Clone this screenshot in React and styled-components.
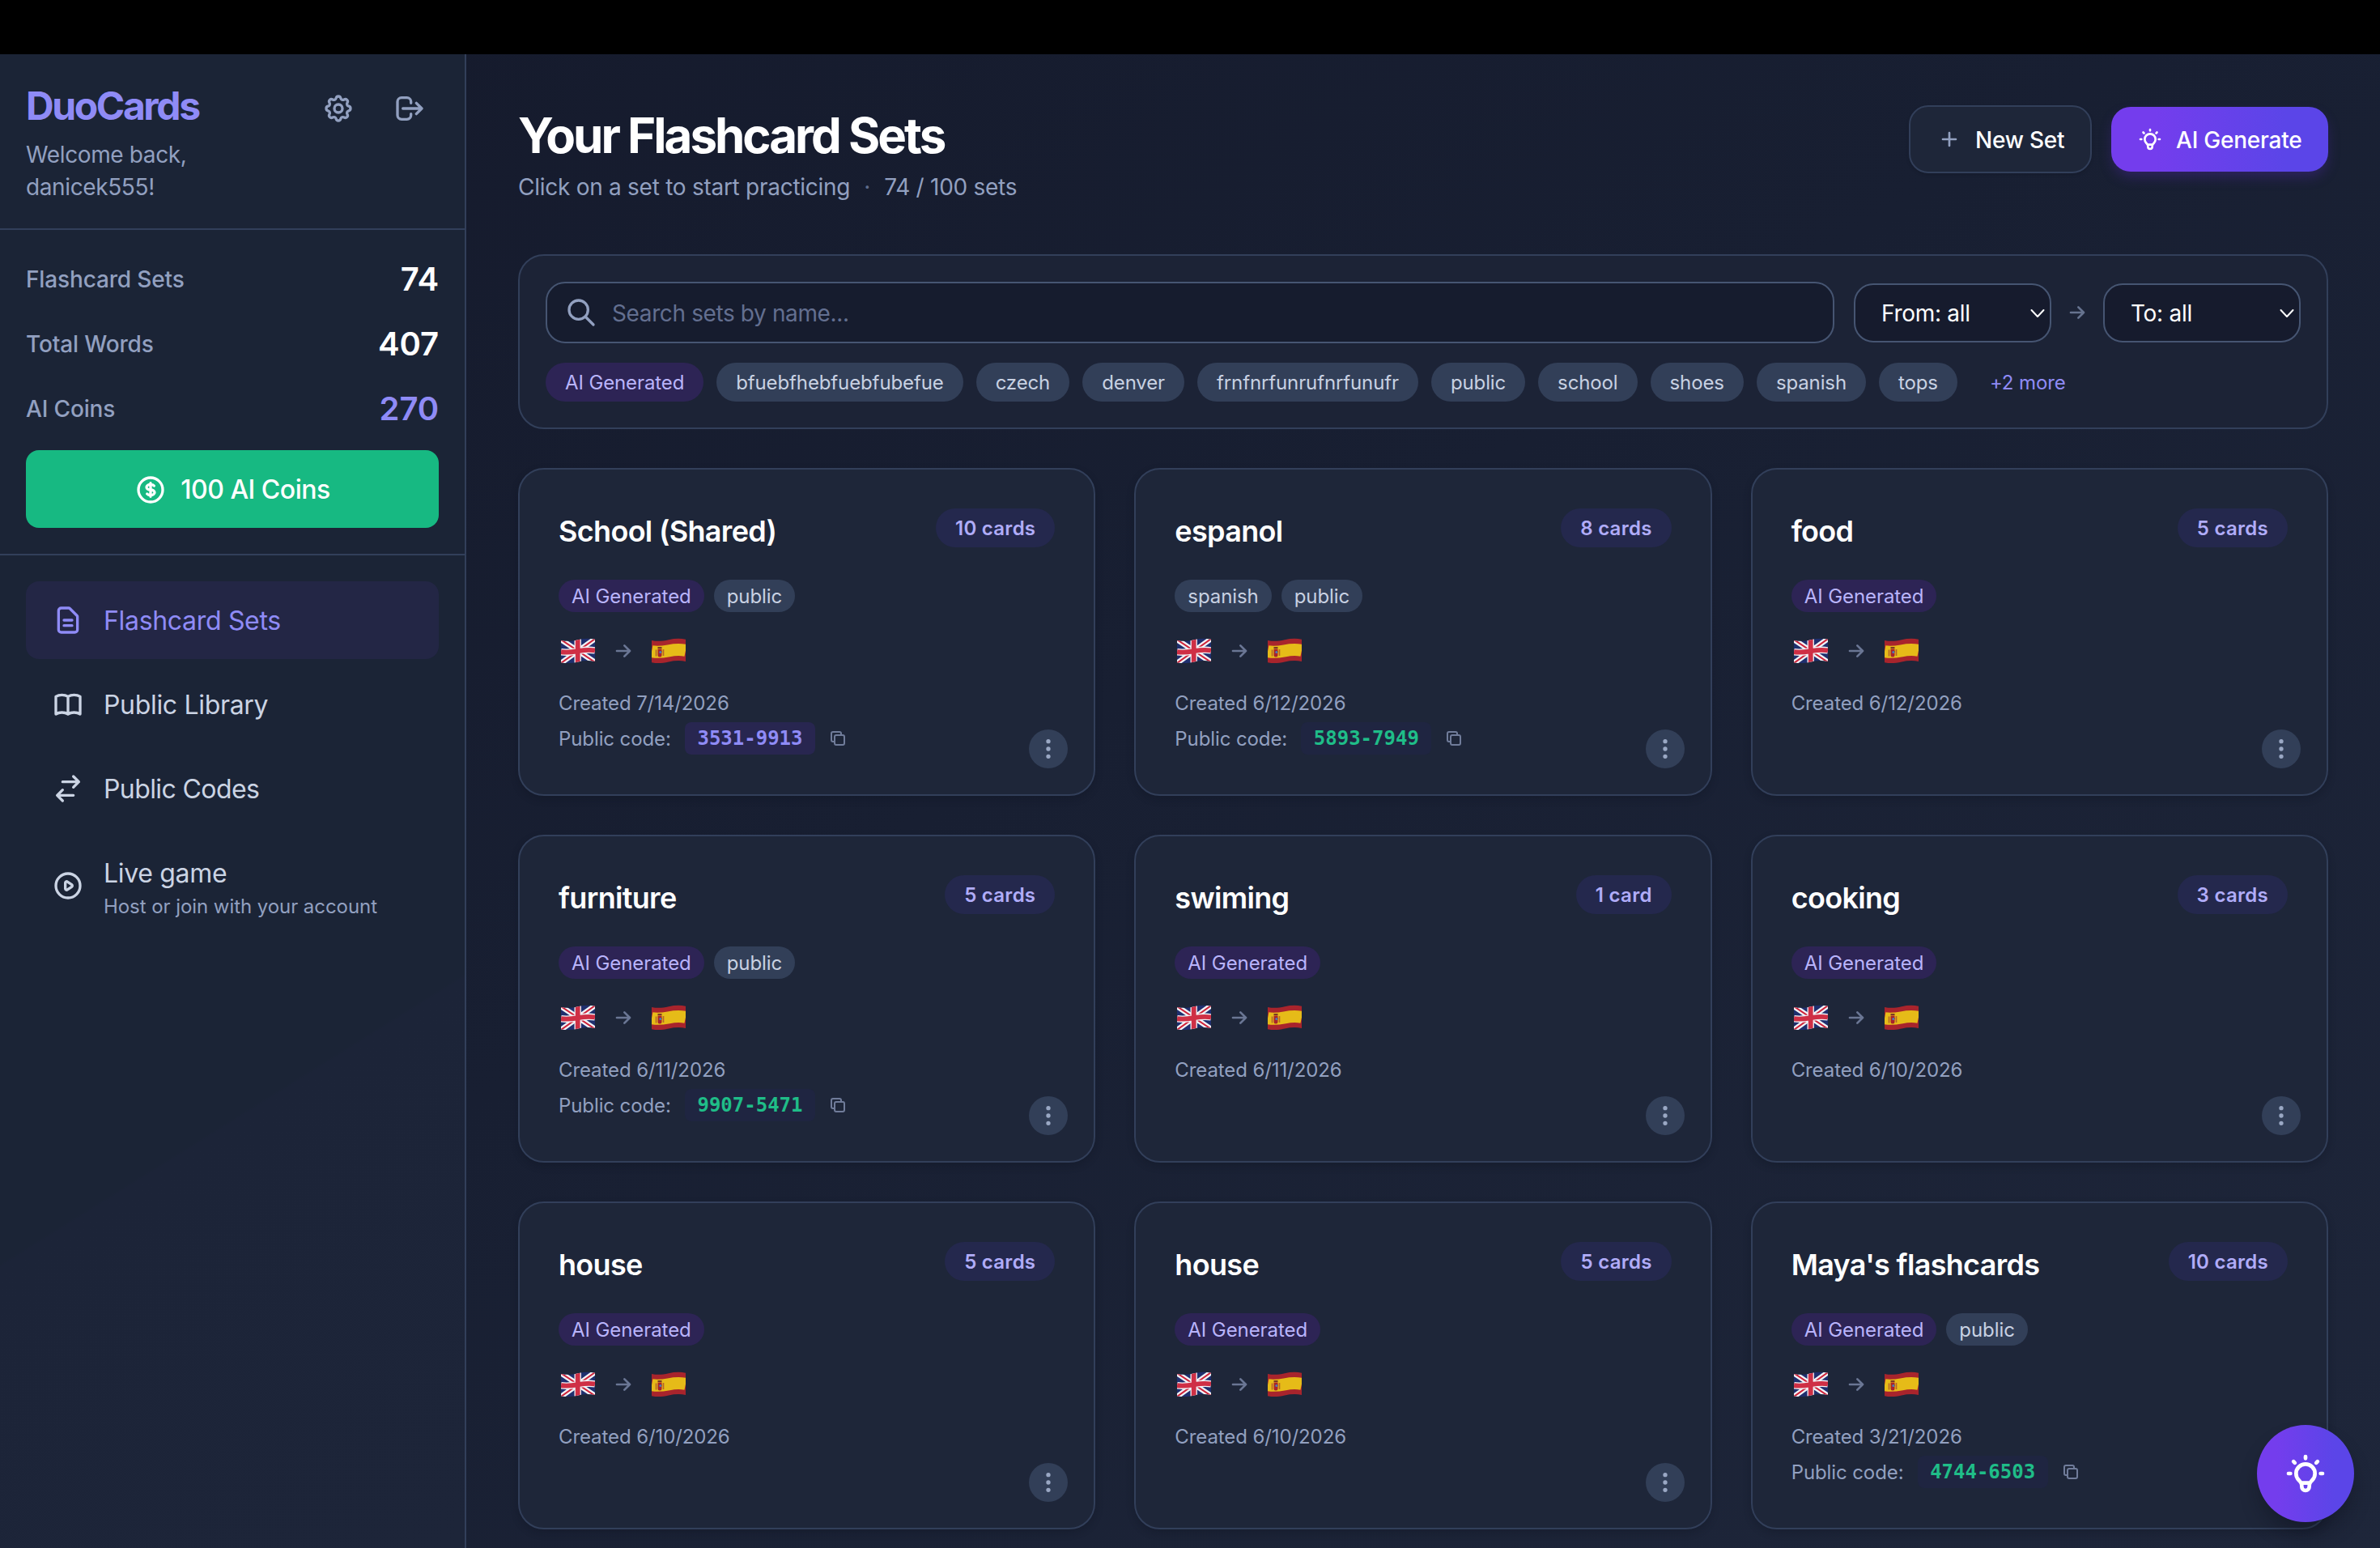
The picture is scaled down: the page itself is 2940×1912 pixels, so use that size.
import React from "react";
import styled, { createGlobalStyle, css } from "styled-components";

const GlobalStyle = createGlobalStyle`
  *, *::before, *::after { box-sizing: border-box; }
  html, body { margin: 0; padding: 0; background: #000; }
  body {
    width: 2940px;
    height: 1912px;
    overflow: hidden;
    font-family: Inter, "Noto Sans", sans-serif;
    color: #fff;
    -webkit-font-smoothing: antialiased;
  }
  button, input { font-family: inherit; }
  h1, h2, p { margin: 0; }
`;

const Screen = styled.div`
  display: flex;
  flex-direction: column;
  width: 2940px;
  height: 1912px;
  overflow: hidden;
`;

const Notch = styled.div`
  flex: none;
  height: 67px;
  background: #000;
`;

const Shell = styled.div`
  flex: 1;
  min-height: 0;
  display: flex;
  background: linear-gradient(to bottom right, #151a2c 0%, #181f32 45%, #1e263a 100%);
`;

const Sidebar = styled.aside`
  flex: none;
  width: 576px;
  border-right: 2px solid #323f5a;
  background: linear-gradient(148deg, #1b2436 0%, #1b2436 67.8%, #1c2438 68%, #1d2539 100%);
`;

const SideHeader = styled.div`
  height: 217px;
  padding: 31px 32px 0;
  display: flex;
  justify-content: space-between;
  border-bottom: 2px solid #323f5a;
`;

const Brand = styled.h1`
  padding-top: 1px;
  font-size: 48px;
  line-height: 64px;
  font-weight: 700;
  letter-spacing: -2.4px;
  color: #8f8bf6;
`;

const Welcome = styled.p`
  margin-top: 8px;
  width: 260px;
  font-size: 28px;
  line-height: 40px;
  color: #92a0c0;
  letter-spacing: -0.38px;
`;

const SideActions = styled.div`
  display: flex;
  gap: 16px;
`;

const IconButton = styled.button`
  width: 72px;
  height: 72px;
  padding: 16px;
  border: 0;
  background: none;
  color: #92a0c0;
`;

const Stats = styled.div`
  height: 402px;
  padding: 32px 32px 0;
  display: flex;
  flex-direction: column;
  gap: 24px;
  border-bottom: 2px solid #323f5a;
`;

const StatRow = styled.div`
  display: flex;
  align-items: center;
  justify-content: space-between;
  height: 56px;
  padding-top: 1px;
`;

const StatLabel = styled.span`
  font-size: 28px;
  font-weight: 500;
  letter-spacing: -0.15px;
  color: #92a0c0;
`;

const StatValue = styled.span`
  font-size: 40px;
  font-weight: 600;
  letter-spacing: -0.1px;
  color: ${(p) => (p.$accent ? "#8f8bf6" : "#fff")};
`;

const CoinButton = styled.button`
  display: flex;
  align-items: center;
  justify-content: center;
  gap: 17px;
  height: 96px;
  padding-top: 2px;
  border: 0;
  border-radius: 16px;
  background: #17b982;
  color: #fff;
  font-size: 32px;
  font-weight: 500;
  letter-spacing: -0.5px;
`;

const Nav = styled.nav`
  display: flex;
  flex-direction: column;
  gap: 8px;
  padding: 32px;
`;

const NavItem = styled.a`
  display: flex;
  align-items: center;
  gap: 24px;
  padding: 24px 32px;
  border-radius: 16px;
  background: ${(p) => (p.$active ? "#232645" : "transparent")};
  color: ${(p) => (p.$active ? "#8f8bf6" : "#cbd4e4")};
`;

const NavText = styled.div`
  display: flex;
  flex-direction: column;
  font-size: 32px;
  line-height: 50px;
  height: ${(p) => (p.$tall ? 80 : 48)}px;
  font-weight: 400;
  letter-spacing: ${(p) => (p.$tight ? "-0.6px" : "-0.32px")};
`;

const NavHint = styled.span`
  font-size: 24px;
  line-height: 32px;
  font-weight: 400;
  letter-spacing: -0.06px;
  color: #92a0c0;
`;

const Main = styled.main`
  flex: 1;
  min-width: 0;
  padding: 63px 64px 0;
  display: flex;
  flex-direction: column;
`;

const PageHeader = styled.header`
  display: flex;
  justify-content: space-between;
  height: 184px;
`;

const PageTitle = styled.h1`
  font-size: 60px;
  line-height: 74px;
  font-weight: 700;
  letter-spacing: -3px;
`;

const Subtitle = styled.p`
  margin-top: 6px;
  display: flex;
  align-items: center;
  font-size: 28px;
  line-height: 42px;
  letter-spacing: -0.27px;
  color: #92a0c0;
`;

const Dot = styled.span`
  width: 42px;
  text-align: center;
  color: #5f6c8c;
`;

const HeaderActions = styled.div`
  display: flex;
  align-items: center;
  align-self: flex-start;
  gap: 24px;
`;

const Button = styled.button`
  display: flex;
  align-items: center;
  gap: 16px;
  padding: 0 32px;
  border-radius: 24px;
  color: #fff;
  font-size: 28px;
  font-weight: 500;
  letter-spacing: -0.22px;
  white-space: nowrap;
  ${(p) =>
    p.$primary
      ? css`
          width: 268px;
          height: 80px;
          border: 0;
          background: linear-gradient(to right, #743ded 20%, #5b45e8 80%);
          box-shadow: 0 8px 16px -2px rgba(80, 40, 170, 0.4);
        `
      : css`
          width: 226px;
          height: 84px;
          border: 2px solid #323f5a;
          background: #1e2639;
          box-shadow: 0 2px 4px rgba(0, 0, 0, 0.12);
          svg { color: #92a0c0; }
        `}
`;

const ButtonText = styled.span`
  padding-top: 1px;
`;

const FilterPanel = styled.section`
  height: 216px;
  padding: 32px;
  border: 2px solid #323f5a;
  border-radius: 32px;
  background: #1c2336;
`;

const FilterRow = styled.div`
  display: flex;
  align-items: center;
  height: 76px;
`;

const SearchBox = styled.label`
  flex: 1;
  height: 76px;
  display: flex;
  align-items: center;
  gap: 16px;
  padding: 0 22px;
  margin-right: 24px;
  border: 2px solid #465572;
  border-radius: 24px;
  background: #161c2e;
  color: #92a0c0;
`;

const SearchInput = styled.input`
  flex: 1;
  height: 70px;
  border: 0;
  padding: 1px 2px 0;
  outline: 0;
  background: none;
  color: #fff;
  font-size: 28px;
  letter-spacing: -0.38px;
  &::placeholder { color: #636f90; opacity: 1; }
`;

const SelectBox = styled.div`
  width: 244px;
  height: 73px;
  display: flex;
  align-items: center;
  justify-content: space-between;
  padding: 1px 3px 0 32px;
  border: 2px solid #465572;
  border-radius: 24px;
  background: #161b2d;
  font-size: 28px;
  letter-spacing: -0.28px;
`;

const ArrowSlot = styled.span`
  display: flex;
  margin: 0 16px;
  color: #66738f;
`;

const ChipRow = styled.div`
  display: flex;
  gap: 16px;
  margin-top: 24px;
`;

const Chip = styled.span`
  height: 48px;
  padding: 0 24px;
  border-radius: 24px;
  font-size: 24px;
  line-height: 50px;
  letter-spacing: -0.12px;
  white-space: nowrap;
  background: ${(p) => (p.$tone === "ai" ? "#2d2455" : p.$tone === "more" ? "transparent" : "#323f58")};
  color: ${(p) => (p.$tone === "ai" ? "#b9b4fb" : p.$tone === "more" ? "#8f8bf6" : "#c8d1e2")};
`;

const Grid = styled.section`
  margin-top: 48px;
  display: grid;
  grid-template-columns: repeat(3, minmax(0, 1fr));
  grid-auto-rows: 405px;
  gap: 48px;
`;

const Card = styled.article`
  position: relative;
  padding: 48px;
  border: 2px solid #323f5a;
  border-radius: 32px;
  background: #1e2639;
  box-shadow: 0 4px 10px rgba(10, 14, 28, 0.25);
`;

const CardTop = styled.div`
  display: flex;
  justify-content: space-between;
  align-items: flex-start;
`;

const CardTitle = styled.h2`
  font-size: 36px;
  line-height: 56px;
  font-weight: 600;
  letter-spacing: -0.68px;
`;

const CountBadge = styled.span`
  height: 48px;
  padding: 0 24px;
  border-radius: 24px;
  background: #24284d;
  color: #b0acf8;
  font-size: 24px;
  line-height: 50px;
  font-weight: 600;
  letter-spacing: 0.27px;
`;

const Tags = styled.div`
  display: flex;
  gap: 12px;
  margin-top: 32px;
`;

const Tag = styled.span`
  height: 40px;
  padding: 0 16px;
  border-radius: 20px;
  font-size: 24px;
  line-height: 41px;
  letter-spacing: -0.08px;
  background: ${(p) => (p.$ai ? "#2d2455" : "#323f58")};
  color: ${(p) => (p.$ai ? "#b9b4fb" : "#c8d1e2")};
`;

const Languages = styled.div`
  display: flex;
  align-items: center;
  gap: 16px;
  height: 48px;
  margin-top: 24px;
  color: #6a7694;
`;

const Meta = styled.div`
  margin-top: 25px;
  display: flex;
  flex-direction: column;
  gap: 7px;
  font-size: 24px;
  line-height: 32px;
  letter-spacing: -0.1px;
  color: #92a0c0;
`;

const CodeRow = styled.div`
  display: flex;
  align-items: center;
  height: 40px;
  gap: 16px;
  color: #707c9a;
`;

const CodeLabel = styled.span`
  width: 140px;
  padding-top: 2px;
  white-space: nowrap;
  color: #92a0c0;
`;

const Code = styled.code`
  width: 161px;
  height: 40px;
  border-radius: 8px;
  text-align: center;
  background: ${(p) => (p.$own ? "#282650" : "#1f2541")};
  color: ${(p) => (p.$own ? "#8f8bf6" : "#1fbd88")};
  font-family: "DejaVu Sans Mono", monospace;
  font-size: 24px;
  line-height: 40px;
  font-weight: 700;
  letter-spacing: 0;
`;

const MoreButton = styled.button`
  position: absolute;
  right: 32px;
  bottom: 32px;
  width: 48px;
  height: 48px;
  padding: 8px;
  border: 0;
  border-radius: 50%;
  background: #323f58;
  color: #9aa8c4;
`;

const Fab = styled.button`
  position: fixed;
  right: 32px;
  bottom: 32px;
  width: 120px;
  height: 120px;
  padding: 32px;
  border: 0;
  border-radius: 50%;
  background: linear-gradient(to right, #743ded 20%, #5b45e8 80%);
  color: #fff;
  box-shadow: 0 16px 24px -4px rgba(10, 12, 26, 0.4);
`;

const Svg = styled.svg`
  display: block;
  flex: none;
  fill: none;
  stroke: currentColor;
  stroke-linecap: round;
  stroke-linejoin: round;
`;

const ICONS = {
  cog: "M10.325 4.317c.426-1.756 2.924-1.756 3.35 0a1.724 1.724 0 002.573 1.066c1.543-.94 3.31.826 2.37 2.37a1.724 1.724 0 001.065 2.572c1.756.426 1.756 2.924 0 3.35a1.724 1.724 0 00-1.066 2.573c.94 1.543-.826 3.31-2.37 2.37a1.724 1.724 0 00-2.572 1.065c-.426 1.756-2.924 1.756-3.35 0a1.724 1.724 0 00-2.573-1.066c-1.543.94-3.31-.826-2.37-2.37a1.724 1.724 0 00-1.065-2.572c-1.756-.426-1.756-2.924 0-3.35a1.724 1.724 0 001.066-2.573c-.94-1.543.826-3.31 2.37-2.37.996.608 2.296.07 2.572-1.065zM15 12a3 3 0 11-6 0 3 3 0 016 0z",
  logout: "M17 16l4-4m0 0l-4-4m4 4H7m6 4v1a3 3 0 01-3 3H6a3 3 0 01-3-3V7a3 3 0 013-3h4a3 3 0 013 3v1",
  coin: "M12 8c-1.657 0-3 .895-3 2s1.343 2 3 2 3 .895 3 2-1.343 2-3 2m0-8c1.11 0 2.08.402 2.599 1M12 8V7m0 1v8m0 0v1m0-1c-1.11 0-2.08-.402-2.599-1M21 12a9 9 0 11-18 0 9 9 0 0118 0z",
  doc: "M9 12h6m-6 4h6m2 5H7a2 2 0 01-2-2V5a2 2 0 012-2h5.586a1 1 0 01.707.293l5.414 5.414a1 1 0 01.293.707V19a2 2 0 01-2 2z",
  book: "M12 6.253v13m0-13C10.832 5.477 9.246 5 7.5 5S4.168 5.477 3 6.253v13C4.168 18.477 5.754 18 7.5 18s3.332.477 4.5 1.253m0-13C13.168 5.477 14.754 5 16.5 5c1.747 0 3.332.477 4.5 1.253v13C19.832 18.477 18.247 18 16.5 18c-1.746 0-3.332.477-4.5 1.253",
  swap: "M8 7h12m0 0l-4-4m4 4l-4 4m0 6H4m0 0l4 4m-4-4l4-4",
  play: "M14.752 11.168l-3.197-2.132A1 1 0 0010 9.87v4.263a1 1 0 001.555.832l3.197-2.132a1 1 0 000-1.664zM21 12a9 9 0 11-18 0 9 9 0 0118 0z",
  plus: "M12 6v6m0 0v6m0-6h6m-6 0H6",
  bulb: "M9.663 17h4.673M12 3v1m6.364 1.636l-.707.707M21 12h-1M4 12H3m3.343-5.657l-.707-.707m2.828 9.9a5 5 0 117.072 0l-.548.547A3.374 3.374 0 0014 18.469V19a2 2 0 11-4 0v-.531c0-.895-.356-1.754-.988-2.386l-.548-.547z",
  search: "M21 21l-6-6m2-5a7 7 0 11-14 0 7 7 0 0114 0z",
  arrow: "M13 7l5 5m0 0l-5 5m5-5H6",
  copy: "M8 16H6a2 2 0 01-2-2V6a2 2 0 012-2h8a2 2 0 012 2v2m-6 12h8a2 2 0 002-2v-8a2 2 0 00-2-2h-8a2 2 0 00-2 2v8a2 2 0 002 2z",
  dots: "M12 5v.01M12 12v.01M12 19v.01M12 6a1 1 0 110-2 1 1 0 010 2zm0 7a1 1 0 110-2 1 1 0 010 2zm0 7a1 1 0 110-2 1 1 0 010 2z",
};

const Icon = ({ name, size, stroke = 2 }) => (
  <Svg width={size} height={size} viewBox="0 0 24 24" strokeWidth={stroke}>
    <path d={ICONS[name]} />
  </Svg>
);

const Chevron = () => (
  <Svg width="24" height="24" viewBox="0 0 24 24" strokeWidth="2">
    <path d="M4.500 8l7.500 8 7.500-8" />
  </Svg>
);

const FlagShape = ({ id, children }) => (
  <Svg width="48" height="48" viewBox="0 0 48 48" strokeWidth="0">
    <defs>
      <clipPath id={id}>
        <path d="M3 11C11 12.600 17 11.600 24 10.200C31 8.800 38 8.200 45 9.800V37C38 35.400 31 36 24 37.400C17 38.800 11 39.800 3 38.200Z" />
      </clipPath>
    </defs>
    <g clipPath={`url(#${id})`} strokeLinecap="butt">
      {children}
    </g>
  </Svg>
);

const UkFlag = ({ id }) => (
  <FlagShape id={id}>
    <rect width="48" height="48" fill="#1f2f6e" />
    <path d="M3 10L45 38M3 39L45 9" stroke="#f1f2f6" strokeWidth="6.500" />
    <path d="M3 10L45 38M3 39L45 9" stroke="#cf2238" strokeWidth="2" />
    <path d="M23.700 4V44M3 25.200C11 26.500 17 25.500 24 24.200S38 22.200 45 23.400" stroke="#f1f2f6" strokeWidth="8.400" />
    <path d="M23.700 4V44M3 25.200C11 26.500 17 25.500 24 24.200S38 22.200 45 23.400" stroke="#cf2f45" strokeWidth="5.800" />
  </FlagShape>
);

const EsFlag = ({ id }) => (
  <FlagShape id={id}>
    <rect width="48" height="48" fill="#a8242c" />
    <path d="M3 24.700C11 26.200 17 25.200 24 23.800S38 21.900 45 23.400" stroke="#e6bb18" strokeWidth="15" />
    <path d="M8.500 22.500v8M17.500 22v8" stroke="#b5622a" strokeWidth="1.600" />
    <path d="M10.500 21.500h5v7.500a2.500 2.500 0 01-5 0z" fill="#a8242c" />
    <path d="M10.500 20h5M13 25h2.500" stroke="#7c3a24" strokeWidth="2" />
    <circle cx="13.800" cy="25.600" r="1.500" fill="#4f79b8" />
  </FlagShape>
);

const CHIPS = ["bfuebfhebfuebfubefue", "czech", "denver", "frnfnrfunrufnrfunufr", "public", "school", "shoes", "spanish", "tops"];

const SETS = [
  { title: "School (Shared)", count: "10 cards", tags: ["AI Generated", "public"], date: "7/14/2026", code: "3531-9913", own: true },
  { title: "espanol", count: "8 cards", tags: ["spanish", "public"], date: "6/12/2026", code: "5893-7949" },
  { title: "food", count: "5 cards", tags: ["AI Generated"], date: "6/12/2026" },
  { title: "furniture", count: "5 cards", tags: ["AI Generated", "public"], date: "6/11/2026", code: "9907-5471" },
  { title: "swiming", count: "1 card", tags: ["AI Generated"], date: "6/11/2026" },
  { title: "cooking", count: "3 cards", tags: ["AI Generated"], date: "6/10/2026" },
  { title: "house", count: "5 cards", tags: ["AI Generated"], date: "6/10/2026" },
  { title: "house", count: "5 cards", tags: ["AI Generated"], date: "6/10/2026" },
  { title: "Maya's flashcards", count: "10 cards", tags: ["AI Generated", "public"], date: "3/21/2026", code: "4744-6503" },
];

const SetCard = ({ set, index }) => (
  <Card>
    <CardTop>
      <CardTitle>{set.title}</CardTitle>
      <CountBadge>{set.count}</CountBadge>
    </CardTop>
    <Tags>
      {set.tags.map((t) => (
        <Tag key={t} $ai={t === "AI Generated"}>{t}</Tag>
      ))}
    </Tags>
    <Languages>
      <UkFlag id={`uk${index}`} />
      <Icon name="arrow" size={32} />
      <EsFlag id={`es${index}`} />
    </Languages>
    <Meta>
      <span>Created {set.date}</span>
      {set.code && (
        <CodeRow>
          <CodeLabel>Public code:</CodeLabel>
          <Code $own={set.own}>{set.code}</Code>
          <Icon name="copy" size={24} />
        </CodeRow>
      )}
    </Meta>
    <MoreButton aria-label="More"><Icon name="dots" size={32} /></MoreButton>
  </Card>
);

export default function App() {
  return (
    <>
      <GlobalStyle />
      <Screen>
        <Notch />
        <Shell>
          <Sidebar>
            <SideHeader>
              <div>
                <Brand>DuoCards</Brand>
                <Welcome>Welcome back, danicek555!</Welcome>
              </div>
              <SideActions>
                <IconButton aria-label="Settings"><Icon name="cog" size={40} /></IconButton>
                <IconButton aria-label="Log out"><Icon name="logout" size={40} /></IconButton>
              </SideActions>
            </SideHeader>
            <Stats>
              <StatRow><StatLabel>Flashcard Sets</StatLabel><StatValue>74</StatValue></StatRow>
              <StatRow><StatLabel>Total Words</StatLabel><StatValue>407</StatValue></StatRow>
              <StatRow><StatLabel>AI Coins</StatLabel><StatValue $accent>270</StatValue></StatRow>
              <CoinButton><Icon name="coin" size={40} />100 AI Coins</CoinButton>
            </Stats>
            <Nav>
              <NavItem $active><Icon name="doc" size={40} /><NavText>Flashcard Sets</NavText></NavItem>
              <NavItem><Icon name="book" size={40} /><NavText>Public Library</NavText></NavItem>
              <NavItem><Icon name="swap" size={40} /><NavText $tight>Public Codes</NavText></NavItem>
              <NavItem>
                <Icon name="play" size={40} />
                <NavText $tall>Live game<NavHint>Host or join with your account</NavHint></NavText>
              </NavItem>
            </Nav>
          </Sidebar>
          <Main>
            <PageHeader>
              <div>
                <PageTitle>Your Flashcard Sets</PageTitle>
                <Subtitle>Click on a set to start practicing<Dot>·</Dot>74 / 100 sets</Subtitle>
              </div>
              <HeaderActions>
                <Button><Icon name="plus" size={32} /><ButtonText>New Set</ButtonText></Button>
                <Button $primary><Icon name="bulb" size={32} /><ButtonText>AI Generate</ButtonText></Button>
              </HeaderActions>
            </PageHeader>
            <FilterPanel>
              <FilterRow>
                <SearchBox>
                  <Icon name="search" size={40} />
                  <SearchInput placeholder="Search sets by name..." />
                </SearchBox>
                <SelectBox>From: all<Chevron /></SelectBox>
                <ArrowSlot><Icon name="arrow" size={32} /></ArrowSlot>
                <SelectBox>To: all<Chevron /></SelectBox>
              </FilterRow>
              <ChipRow>
                <Chip $tone="ai">AI Generated</Chip>
                {CHIPS.map((c) => <Chip key={c}>{c}</Chip>)}
                <Chip $tone="more">+2 more</Chip>
              </ChipRow>
            </FilterPanel>
            <Grid>
              {SETS.map((s, i) => <SetCard key={i} set={s} index={i} />)}
            </Grid>
          </Main>
        </Shell>
        <Fab aria-label="AI Generate"><Icon name="bulb" size={56} /></Fab>
      </Screen>
    </>
  );
}
